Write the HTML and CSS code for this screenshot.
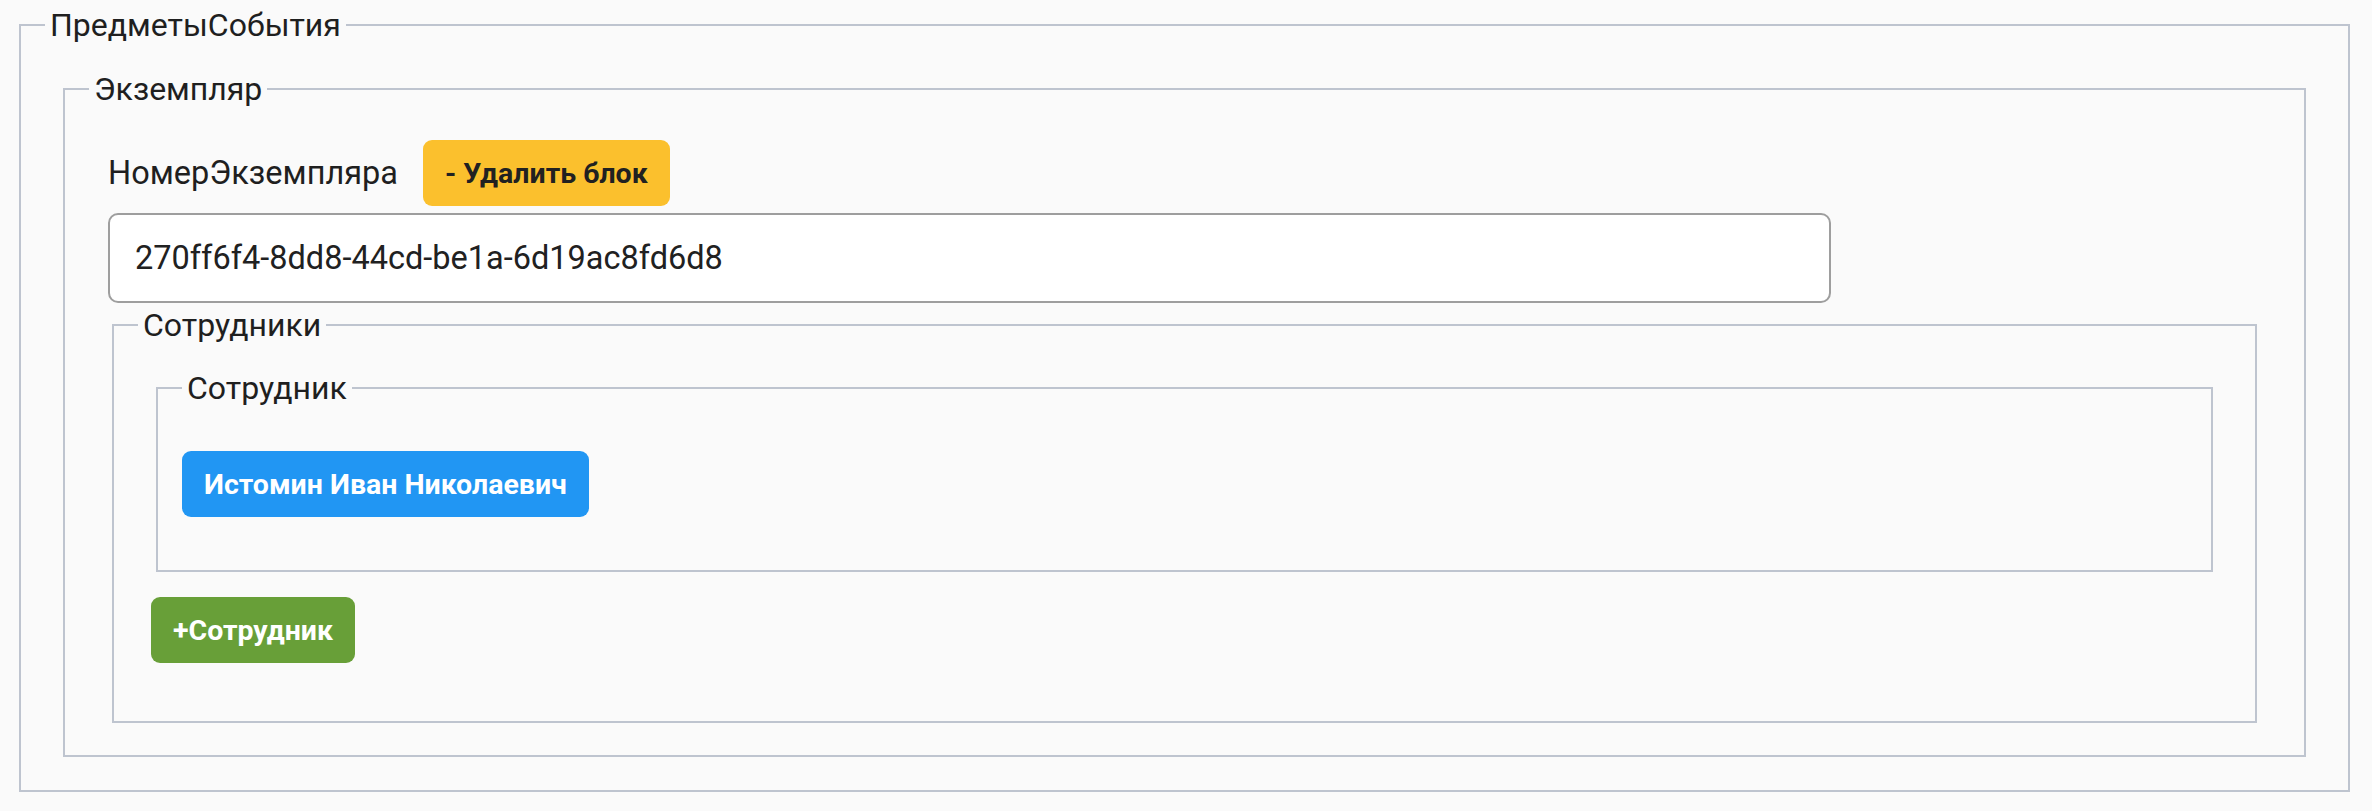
FILE: index.html
```html
<!DOCTYPE html>
<html lang="ru">
<head>
<meta charset="utf-8">
<title>ПредметыСобытия</title>
<link rel="stylesheet" href="styles.css">
</head>
<body>
<fieldset class="fs fs-root">
  <legend class="fs-legend">ПредметыСобытия</legend>
  <div class="fs-body fs-body-root">
    <fieldset class="fs fs-item">
      <legend class="fs-legend">Экземпляр</legend>
      <div class="fs-body fs-body-item">
        <div class="field-head">
          <label class="field-label" for="num">НомерЭкземпляра</label>
          <button class="btn btn-warn" type="button">- Удалить блок</button>
        </div>
        <input class="text-input" id="num" type="text" value="270ff6f4-8dd8-44cd-be1a-6d19ac8fd6d8">
        <fieldset class="fs fs-group">
          <legend class="fs-legend">Сотрудники</legend>
          <div class="fs-body fs-body-group">
            <fieldset class="fs fs-entry">
              <legend class="fs-legend">Сотрудник</legend>
              <div class="fs-body fs-body-entry">
                <button class="btn btn-primary" type="button">Истомин Иван Николаевич</button>
              </div>
            </fieldset>
            <button class="btn btn-success btn-add" type="button">+Сотрудник</button>
          </div>
        </fieldset>
      </div>
    </fieldset>
  </div>
</fieldset>
</body>
</html>
```
FILE: styles.css
```css
html, body {
  margin: 0;
  background: #fafafa;
}
body {
  padding: 6px 22px 18px 19px;
  font-family: Roboto, "Noto Sans", "Liberation Sans", sans-serif;
  color: #212121;
}
.fs {
  margin: 0;
  padding: 0;
  border: 2px solid #bec4cf;
  min-width: 0;
}
.fs-legend {
  margin-left: 24px;
  padding: 0 5px;
  font-size: 32px;
  line-height: 38px;
  color: #1f1f1f;
}
.fs-body-root {
  padding: 26px 42px 33px 42px;
}
.fs-body-item {
  padding: 32px 43px 32px 43px;
}
.fs-group {
  margin: 3px 4px 0 4px;
}
.fs-body-group {
  padding: 25px 37px 58px 37px;
}
.fs-entry {
  margin: 0 5px;
}
.fs-body-entry {
  padding: 44px 24px 53px 24px;
}
.field-head {
  display: flex;
  align-items: center;
  gap: 25px;
}
.field-label {
  font-size: 32.5px;
  line-height: 38px;
  color: #1f1f1f;
}
.btn {
  display: inline-flex;
  align-items: center;
  height: 66px;
  padding: 0 22px;
  border: 0;
  border-radius: 9px;
  font-family: Roboto, "Noto Sans", "Liberation Sans", sans-serif;
  font-size: 28.5px;
  font-weight: 700;
  cursor: pointer;
}
.btn-warn {
  background: #fbc02d;
  color: #212121;
}
.btn-primary {
  background: #2196f3;
  color: #ffffff;
}
.btn-success {
  background: #689f38;
  color: #ffffff;
}
.btn-add {
  margin-top: 25px;
}
.text-input {
  display: block;
  box-sizing: border-box;
  width: 1723px;
  height: 90px;
  margin-top: 7px;
  padding: 0 25px;
  border: 2px solid #9e9e9e;
  border-radius: 10px;
  background: #ffffff;
  font-family: Roboto, "Noto Sans", "Liberation Sans", sans-serif;
  font-size: 32.5px;
  color: #212121;
}
```
